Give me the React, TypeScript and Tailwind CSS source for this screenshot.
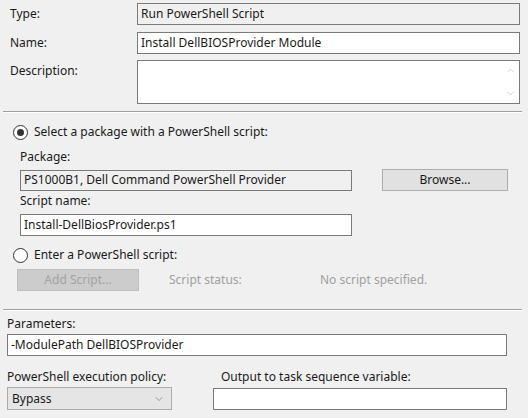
import { ChevronDown, ChevronUp } from "lucide-react";

function Radio({ checked }: { checked?: boolean }) {
  return (
    <span className="flex h-[15px] w-[15px] items-center justify-center rounded-full border border-[#333] bg-white">
      {checked && <span className="h-[7px] w-[7px] rounded-full bg-[#333]" />}
    </span>
  );
}

function Separator() {
  return (
    <div className="mx-[3px] w-[519px]">
      <div className="h-px bg-[#a0a0a0]" />
      <div className="h-px bg-white" />
    </div>
  );
}

function Box({ children, className = "" }: { children?: React.ReactNode; className?: string }) {
  return (
    <div className={`flex items-center border border-[#7a7a7a] px-[3px] ${className}`}>
      {children}
    </div>
  );
}

export default function App() {
  return (
    <div
      className="flex h-[418px] w-[528px] flex-col bg-[#f0f0f0] text-[12px] leading-[14px] text-[#1a1a1a]"
      style={{ fontFamily: '"Segoe UI", "Noto Sans", sans-serif' }}
    >
      {/* general */}
      <div className="mt-[3px] flex h-[22px] items-center">
        <span className="w-[137px] pl-[10px]">Type:</span>
        <Box className="h-full w-[383px] bg-[#f0f0f0]">Run PowerShell Script</Box>
      </div>
      <div className="mt-[7px] flex h-[22px] items-center">
        <span className="w-[137px] pl-[10px]">Name:</span>
        <Box className="h-full w-[383px] bg-white">Install DellBIOSProvider Module</Box>
      </div>
      <div className="mt-[6px] flex h-[44px] items-start">
        <span className="w-[137px] pt-[4px] pl-[10px]">Description:</span>
        <div className="flex h-full w-[383px] justify-end border border-[#7a7a7a] bg-white">
          <div className="flex w-[17px] flex-col items-center justify-between py-[4px] text-[#c2c2c2]">
            <ChevronUp size={11} strokeWidth={1.5} />
            <ChevronDown size={11} strokeWidth={1.5} />
          </div>
        </div>
      </div>

      <div className="mt-[7px]">
        <Separator />
      </div>

      {/* package */}
      <label className="mt-[11px] flex h-[16px] items-center gap-[6px] pl-[13px]">
        <Radio checked />
        <span>Select a package with a PowerShell script:</span>
      </label>
      <span className="mt-[10px] pl-[20px]">Package:</span>
      <div className="mt-[5px] flex items-center pl-[20px]">
        <Box className="h-[21px] w-[332px] bg-[#f0f0f0]">PS1000B1, Dell Command PowerShell Provider</Box>
        <button className="ml-[30px] h-[22px] w-[126px] border border-[#adadad] bg-[#e1e1e1]">
          Browse...
        </button>
      </div>
      <span className="mt-[3px] pl-[20px]">Script name:</span>
      <div className="mt-[6px] pl-[20px]">
        <Box className="h-[22px] w-[332px] bg-white">Install-DellBiosProvider.ps1</Box>
      </div>

      <label className="mt-[11px] flex h-[16px] items-center gap-[6px] pl-[13px]">
        <Radio />
        <span>Enter a PowerShell script:</span>
      </label>
      <div className="mt-[6px] flex h-[22px] items-center pl-[17px] text-[#a0a0a0]">
        <button className="h-full w-[122px] border border-[#bfbfbf] bg-[#cccccc] text-[#a3a3a3]">
          Add Script...
        </button>
        <span className="ml-[30px] w-[151px]">Script status:</span>
        <span>No script specified.</span>
      </div>

      <div className="mt-[18px]">
        <Separator />
      </div>

      {/* parameters */}
      <span className="mt-[6px] pl-[7px]">Parameters:</span>
      <div className="mt-[3px] pl-[7px]">
        <Box className="h-[22px] w-[500px] bg-white">-ModulePath DellBIOSProvider</Box>
      </div>

      <div className="mt-[14px] flex pl-[7px]">
        <div className="flex w-[206px] flex-col">
          <span>PowerShell execution policy:</span>
          <div className="mt-[3px] flex h-[23px] w-[165px] items-center justify-between border border-[#acacac] bg-[#e5e5e5] pr-[6px] pl-[4px]">
            <span>Bypass</span>
            <ChevronDown size={12} strokeWidth={1.25} className="text-[#666]" />
          </div>
        </div>
        <div className="flex flex-col">
          <span className="pl-[8px]">Output to task sequence variable:</span>
          <Box className="mt-[4px] h-[22px] w-[294px] bg-white" />
        </div>
      </div>
    </div>
  );
}
